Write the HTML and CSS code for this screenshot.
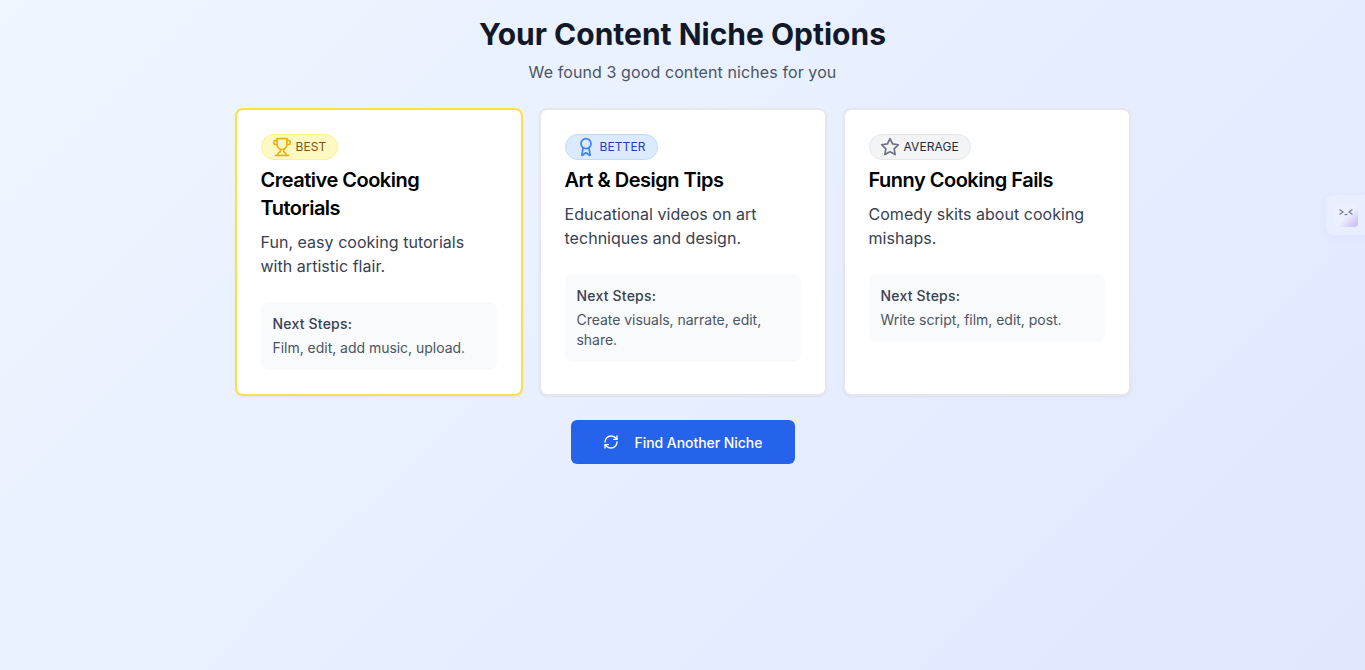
FILE: index.html
```html
<!DOCTYPE html>
<html lang="en">
<head>
    <meta charset="UTF-8">
    <meta name="viewport" content="width=device-width, initial-scale=1.0">
    <title>Your Content Niche Options</title>
    <link rel="stylesheet" href="styles.css">
</head>
<body>
    <main class="container">
        <h1>Your Content Niche Options</h1>
        <p class="subtitle">We found 3 good content niches for you</p>

        <div class="cards">
            <div class="card card-best">
                <span class="badge badge-best">
                    <svg class="icon" viewBox="0 0 24 24"><path d="M6 9H4.5a2.5 2.5 0 0 1 0-5H6"/><path d="M18 9h1.5a2.5 2.5 0 0 0 0-5H18"/><path d="M4 22h16"/><path d="M10 14.66V17c0 .55-.47.98-.97 1.21C7.85 18.75 7 20.24 7 22"/><path d="M14 14.66V17c0 .55.47.98.97 1.21C16.15 18.75 17 20.24 17 22"/><path d="M18 2H6v7a6 6 0 0 0 12 0V2Z"/></svg>
                    BEST
                </span>
                <h2>Creative Cooking Tutorials</h2>
                <p class="desc">Fun, easy cooking tutorials with artistic flair.</p>
                <div class="steps">
                    <h3>Next Steps:</h3>
                    <p>Film, edit, add music, upload.</p>
                </div>
            </div>

            <div class="card">
                <span class="badge badge-better">
                    <svg class="icon" viewBox="0 0 24 24"><path d="m15.477 12.89 1.515 8.526a.5.5 0 0 1-.81.47l-3.58-2.687a1 1 0 0 0-1.197 0l-3.586 2.686a.5.5 0 0 1-.81-.469l1.514-8.526"/><circle cx="12" cy="8" r="6"/></svg>
                    BETTER
                </span>
                <h2>Art &amp; Design Tips</h2>
                <p class="desc">Educational videos on art techniques and design.</p>
                <div class="steps">
                    <h3>Next Steps:</h3>
                    <p>Create visuals, narrate, edit, share.</p>
                </div>
            </div>

            <div class="card">
                <span class="badge badge-average">
                    <svg class="icon" viewBox="0 0 24 24"><polygon points="12 2 15.09 8.26 22 9.27 17 14.14 18.18 21.02 12 17.77 5.82 21.02 7 14.14 2 9.27 8.91 8.26 12 2"/></svg>
                    AVERAGE
                </span>
                <h2>Funny Cooking Fails</h2>
                <p class="desc">Comedy skits about cooking mishaps.</p>
                <div class="steps">
                    <h3>Next Steps:</h3>
                    <p>Write script, film, edit, post.</p>
                </div>
            </div>
        </div>

        <button class="again">
            <svg class="icon icon-small" viewBox="0 0 24 24"><path d="M3 12a9 9 0 0 1 9-9 9.75 9.75 0 0 1 6.74 2.74L21 8"/><path d="M21 3v5h-5"/><path d="M21 12a9 9 0 0 1-9 9 9.75 9.75 0 0 1-6.74-2.74L3 16"/><path d="M8 16H3v5"/></svg>
            Find Another Niche
        </button>
    </main>

    <div class="widget">
        <div class="widget-face">
            <svg class="widget-eyes" viewBox="0 0 24 24"><path d="M5.5 6.5 9 9l-3.5 2.5"/><path d="M18.5 6.5 15 9l3.5 2.5"/><path d="M10.5 11.5h3"/></svg>
        </div>
    </div>
</body>
</html>
```

FILE: styles.css
```css
* {
    box-sizing: border-box;
}
html, body {
    height: 100%;
}
body {
    margin: 0;
    font-family: Inter, "Liberation Sans", sans-serif;
    background: linear-gradient(135deg, #eff6ff, #e0e7ff);
    overflow: hidden;
}
.container {
    width: 896px;
    margin: 0 auto;
    padding-top: 16px;
    display: flex;
    flex-direction: column;
    align-items: center;
}
h1 {
    margin: 0;
    font-size: 30px;
    line-height: 36px;
    font-weight: 700;
    color: #111827;
}
.subtitle {
    margin: 8px 0 24px;
    font-size: 16px;
    line-height: 24px;
    letter-spacing: 0.1px;
    color: #4b5563;
}
.cards {
    width: 100%;
    display: grid;
    grid-template-columns: repeat(3, 1fr);
    gap: 16px;
}
.card {
    background: #fff;
    border: 2px solid #e5e7eb;
    border-radius: 8px;
    padding: 24px;
    box-shadow: 0 1px 2px rgba(0, 0, 0, 0.05);
}
.card-best {
    border-color: #fde047;
}
.badge {
    display: inline-flex;
    align-items: center;
    gap: 4px;
    height: 26px;
    padding: 2px 11px 2px 10px;
    border: 1px solid;
    border-radius: 999px;
    font-size: 12px;
    line-height: 16px;
    font-weight: 400;
    letter-spacing: 0.1px;
    vertical-align: top;
}
.badge-best {
    background: #fef9c3;
    border-color: #fef08a;
    color: #854d0e;
}
.badge-best .icon {
    color: #eab308;
}
.badge-better {
    background: #dbeafe;
    border-color: #bfdbfe;
    color: #1e40af;
}
.badge-better .icon {
    color: #3b82f6;
}
.badge-average {
    background: #f3f4f6;
    border-color: #e5e7eb;
    color: #1f2937;
}
.badge-average .icon {
    color: #6b7280;
}
.icon {
    width: 20px;
    height: 20px;
    fill: none;
    stroke: currentColor;
    stroke-width: 2;
    stroke-linecap: round;
    stroke-linejoin: round;
    flex-shrink: 0;
}
.icon-small {
    width: 16px;
    height: 16px;
}
h2 {
    margin: 6px 0 8px;
    font-size: 20px;
    line-height: 28px;
    font-weight: 600;
    letter-spacing: -0.5px;
    color: #000;
}
.desc {
    margin: 0 0 24px;
    font-size: 16px;
    line-height: 24px;
    letter-spacing: 0.03px;
    color: #374151;
}
.steps {
    background: #f9fafb;
    border-radius: 8px;
    padding: 12px;
}
.steps h3 {
    margin: 0 0 4px;
    font-size: 14px;
    line-height: 20px;
    font-weight: 500;
    letter-spacing: 0.2px;
    color: #374151;
}
.steps p {
    margin: 0;
    font-size: 14px;
    line-height: 20px;
    letter-spacing: -0.03px;
    color: #4b5563;
}
.again {
    margin-top: 24px;
    width: 224px;
    height: 44px;
    padding: 0 32px;
    display: flex;
    align-items: center;
    gap: 16px;
    background: #2563eb;
    color: #fff;
    border: none;
    border-radius: 6px;
    font-family: inherit;
    font-size: 14px;
    font-weight: 500;
    letter-spacing: -0.05px;
    white-space: nowrap;
    cursor: pointer;
}
.widget {
    position: fixed;
    top: 195px;
    right: -8px;
    width: 47px;
    height: 40px;
    padding: 8px;
    background: rgba(255, 255, 255, 0.2);
    border-radius: 8px;
    box-shadow: 0 2px 8px rgba(99, 102, 241, 0.05);
}
.widget-face {
    width: 24px;
    height: 24px;
    border-radius: 4px;
    background: linear-gradient(135deg, #eceffd 55%, #c9b5f5);
}
.widget-eyes {
    display: block;
    width: 24px;
    height: 24px;
    fill: none;
    stroke: #7b8194;
    stroke-width: 1.3;
}
```
